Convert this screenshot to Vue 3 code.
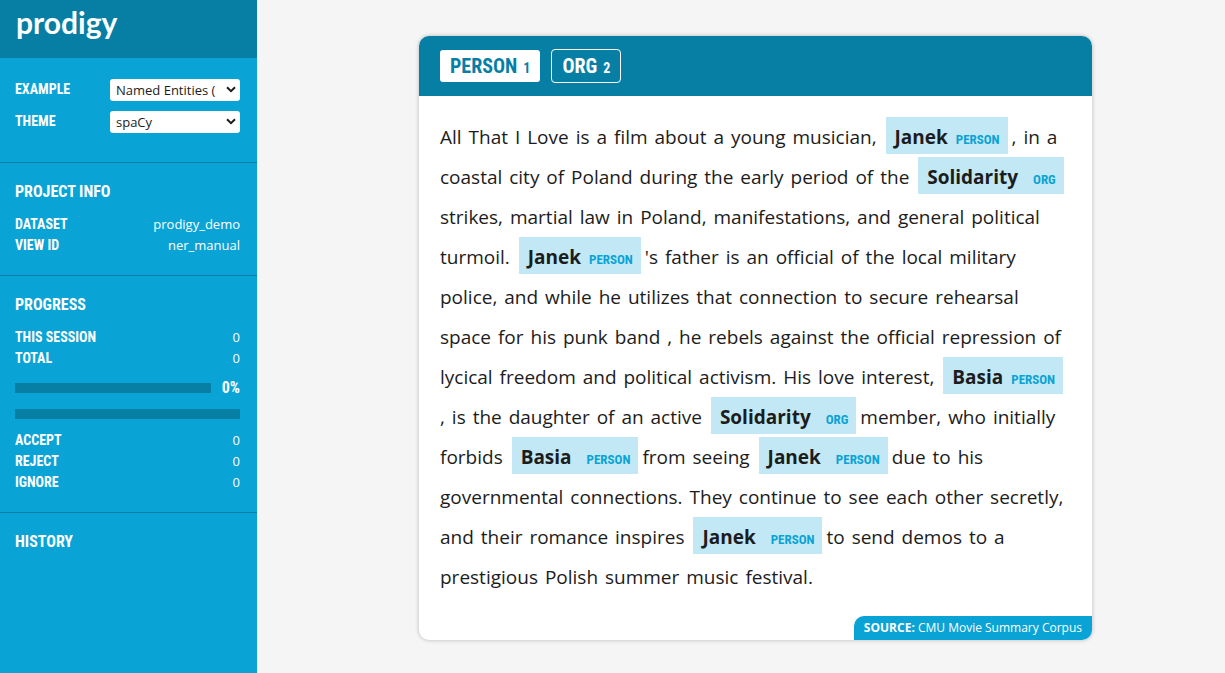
<script setup>
import { ref } from 'vue'

const example = ref('Named Entities (manual)')
const theme = ref('spaCy')
const active = ref('PERSON')

const info = [
  ['Dataset', 'prodigy_demo'],
  ['View ID', 'ner_manual'],
]
const totals = [
  ['This session', 0],
  ['Total', 0],
]
const decisions = [
  ['Accept', 0],
  ['Reject', 0],
  ['Ignore', 0],
]
const labels = [
  { name: 'PERSON', key: 1 },
  { name: 'ORG', key: 2 },
]

// "open" entities include the trailing space of their last token
const source = [
  'All That I Love is a film about a young musician,',
  { text: 'Janek', label: 'PERSON' },
  ', in a coastal city of Poland during the early period of the',
  { text: 'Solidarity', label: 'ORG', open: true },
  'strikes, martial law in Poland, manifestations, and general political turmoil.',
  { text: 'Janek', label: 'PERSON' },
  "'s father is an official of the local military police, and while he utilizes that connection to secure rehearsal space for his punk band , he rebels against the official repression of lycical freedom and political activism. His love interest,",
  { text: 'Basia', label: 'PERSON' },
  ', is the daughter of an active',
  { text: 'Solidarity', label: 'ORG', open: true },
  'member, who initially forbids',
  { text: 'Basia', label: 'PERSON', open: true },
  'from seeing',
  { text: 'Janek', label: 'PERSON', open: true },
  'due to his governmental connections. They continue to see each other secretly, and their romance inspires',
  { text: 'Janek', label: 'PERSON', open: true },
  'to send demos to a prestigious Polish summer music festival.',
]
const tokens = source.flatMap((part) =>
  typeof part === 'string' ? part.split(' ').map((text) => ({ text })) : [part]
)
</script>

<template>
  <div class="app">
    <aside class="sidebar">
      <header class="brand"><a class="logo" href="#">prodigy</a></header>

      <section class="section controls">
        <div class="control">
          <label class="caption" for="example">Example</label>
          <div class="picker">
            <select id="example" v-model="example">
              <option>Named Entities (manual)</option>
              <option>Text Classification</option>
            </select>
            <svg viewBox="0 0 10 7" aria-hidden="true"><path d="M1 1.2l4 4 4-4" /></svg>
          </div>
        </div>
        <div class="control">
          <label class="caption" for="theme">Theme</label>
          <div class="picker">
            <select id="theme" v-model="theme">
              <option>spaCy</option>
              <option>Prodigy</option>
            </select>
            <svg viewBox="0 0 10 7" aria-hidden="true"><path d="M1 1.2l4 4 4-4" /></svg>
          </div>
        </div>
      </section>

      <section class="section">
        <h2>Project Info</h2>
        <table>
          <tbody>
            <tr v-for="[name, value] in info" :key="name">
              <th class="caption" scope="row">{{ name }}</th>
              <td>{{ value }}</td>
            </tr>
          </tbody>
        </table>
      </section>

      <section class="section">
        <h2>Progress</h2>
        <table>
          <tbody>
            <tr v-for="[name, value] in totals" :key="name">
              <th class="caption" scope="row">{{ name }}</th>
              <td>{{ value }}</td>
            </tr>
          </tbody>
        </table>
        <div class="progress">
          <div class="bar"></div>
          <strong>0%</strong>
        </div>
        <div class="bar split"></div>
        <table>
          <tbody>
            <tr v-for="[name, value] in decisions" :key="name">
              <th class="caption" scope="row">{{ name }}</th>
              <td>{{ value }}</td>
            </tr>
          </tbody>
        </table>
      </section>

      <section class="section last">
        <h2>History</h2>
      </section>
    </aside>

    <main class="main">
      <article class="card">
        <header class="labels">
          <button
            v-for="item in labels"
            :key="item.name"
            type="button"
            class="label"
            :class="{ active: active === item.name }"
            @click="active = item.name"
          >
            {{ item.name }}<span class="key">{{ item.key }}</span>
          </button>
        </header>
        <p class="text">
          <template v-for="(token, i) in tokens" :key="i"
            ><mark v-if="token.label" :class="{ open: token.open }"
              >{{ token.text }}<span class="tag">{{ token.label }}</span></mark
            ><span v-else class="token">{{ token.text + ' ' }}</span
            ><wbr
          /></template>
        </p>
        <footer class="source"><strong>SOURCE:</strong> CMU Movie Summary Corpus</footer>
      </article>
    </main>
  </div>
</template>

<style>
body {
  margin: 0;
  background: #f5f5f5;
}
</style>

<style scoped>
* {
  box-sizing: border-box;
}
.app {
  display: flex;
  min-height: 100vh;
  font-family: 'Segoe UI', 'Open Sans', 'Noto Sans', sans-serif;
  color: #1c1c1c;
}
.sidebar {
  flex: 0 0 257px;
  background: #09a3d5;
  color: #fff;
}
.brand {
  height: 58px;
  padding: 4px 16px;
  background: #077fa5;
}
.logo {
  color: #fff;
  font: bold 30px/36px Lato, sans-serif;
  text-decoration: none;
}
.section {
  padding: 18px 17px 19px 15px;
  border-bottom: 1px solid #077fa5;
}
.section.last {
  border-bottom: 0;
}
.controls {
  display: flex;
  flex-direction: column;
  gap: 10px;
  padding-top: 20px;
  padding-bottom: 30px;
}
.control {
  display: flex;
  align-items: center;
  justify-content: space-between;
}
.picker {
  position: relative;
  width: 130px;
  height: 22px;
}
.picker select {
  width: 100%;
  height: 100%;
  padding: 0 24px 0 6px;
  border: 0;
  border-radius: 3px;
  appearance: none;
  background: #fff;
  color: #1c1c1c;
  font: 13px 'Segoe UI', 'Open Sans', sans-serif;
}
.picker svg {
  position: absolute;
  top: 8px;
  right: 4px;
  width: 10px;
  height: 7px;
  fill: none;
  stroke: #1c1c1c;
  stroke-width: 2;
  pointer-events: none;
}
h2,
.caption,
.progress strong,
.label,
.tag {
  font-family: 'Roboto Condensed', 'Liberation Sans Narrow', sans-serif;
  font-weight: bold;
  text-transform: uppercase;
}
h2 {
  margin: 0 0 11px;
  font-size: 16px;
  line-height: 22px;
}
.caption {
  font-size: 14px;
  text-align: left;
}
table {
  width: 100%;
  border-collapse: collapse;
}
th,
td {
  height: 21px;
  padding: 0;
  line-height: 21px;
}
td {
  font-size: 13px;
  text-align: right;
}
.progress {
  display: flex;
  align-items: center;
  gap: 11px;
  margin-top: 9px;
}
.progress strong {
  flex: 0 0 18px;
  font-size: 16px;
  line-height: 20px;
}
.bar {
  flex: 1;
  height: 10px;
  background: #077fa5;
}
.split {
  margin: 11px 0;
}
.main {
  flex: 1;
  padding: 36px 133px 33px 162px;
}
.card {
  position: relative;
  max-width: 673px;
  margin: 0 auto;
  overflow: hidden;
  border-radius: 10px;
  background: #fff;
  box-shadow: 0 0 4px rgba(0, 0, 0, 0.25);
}
.labels {
  display: flex;
  align-items: center;
  gap: 11px;
  height: 60px;
  padding: 0 21px;
  background: #077fa5;
}
.label {
  height: 34px;
  padding: 0 10px;
  border: 1px solid #fff;
  border-radius: 4px;
  background: transparent;
  color: #fff;
  font-size: 20px;
  line-height: 32px;
}
.label.active {
  height: 32px;
  border: 0;
  border-radius: 3px;
  background: #fff;
  color: #077fa5;
}
.key {
  margin-left: 6px;
  font-size: 14px;
}
.text {
  margin: 0;
  padding: 21px 23px 43px 21px;
  font-size: 19px;
  line-height: 40px;
}
.token {
  margin-right: 2px;
}
mark {
  margin: 0 4px 0 2px;
  padding: 7px 8px 4px 9px;
  background: #c1e8f4;
  color: inherit;
  font-size: 19px;
  font-weight: bold;
  line-height: 1;
  white-space: nowrap;
}
.tag {
  margin-left: 8px;
  color: #09a3d5;
  font-size: 13px;
}
.open .tag {
  margin-left: 15px;
}
.source {
  position: absolute;
  right: 0;
  bottom: 0;
  padding: 0 10px;
  border-top-left-radius: 10px;
  background: #09a3d5;
  color: #fff;
  font-size: 12px;
  line-height: 24px;
}
</style>
